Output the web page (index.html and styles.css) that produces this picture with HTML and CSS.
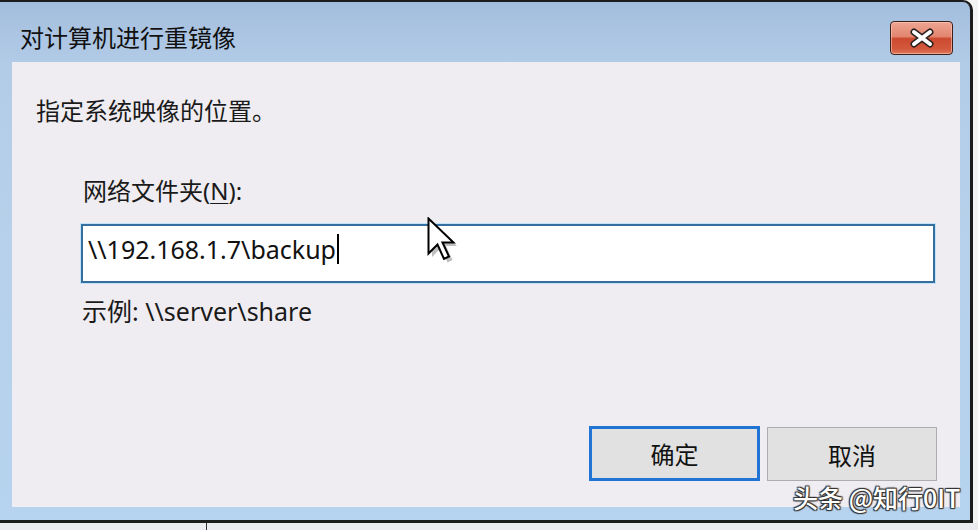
FILE: index.html
```html
<!DOCTYPE html>
<html lang="zh-CN">
<head>
<meta charset="utf-8">
<title>对计算机进行重镜像</title>
<link rel="stylesheet" href="styles.css">
</head>
<body>
<div class="screen">
  <div class="window">
    <div class="titlebar">
      <div class="title">对计算机进行重镜像</div>
      <button class="close" aria-label="关闭">
        <svg width="26" height="20" viewBox="0 0 26 20">
          <path d="M5 4 L21 16 M21 4 L5 16" stroke="#2a2020" stroke-width="7" stroke-linecap="round" fill="none"/>
          <path d="M5 4 L21 16 M21 4 L5 16" stroke="#ffffff" stroke-width="4" stroke-linecap="round" fill="none"/>
        </svg>
      </button>
    </div>
    <div class="content">
      <p class="intro">指定系统映像的位置。</p>
      <div class="group">
        <label class="label">网络文件夹(<u>N</u>):</label>
        <div class="input"><span class="value">\\192.168.1.7\backup</span><span class="caret"></span></div>
        <p class="example">示例: \\server\share</p>
      </div>
      <div class="buttons">
        <button class="btn btn-default">确定</button>
        <button class="btn">取消</button>
      </div>
    </div>
  </div>
  <div class="taskbar">
    <div class="task-cell"></div>
    <div class="task-rest"></div>
  </div>
  <svg class="cursor" width="30" height="46" viewBox="0 0 30 46">
    <path d="M3.5 3.5 L3.5 38.5 L12.5 29.5 L19 44 L24 41.5 L17.5 27.5 L28.5 27.5 Z" fill="#000" opacity="0.25" transform="translate(1.5,1.5)"/>
    <path d="M1.5 1.5 L1.5 36.5 L10.5 27.5 L17 42 L22 39.5 L15.5 25.5 L26.5 25.5 Z" fill="#fff" stroke="#000" stroke-width="2" stroke-linejoin="miter"/>
  </svg>
  <div class="watermark">头条 @知行0IT</div>
</div>
</body>
</html>
```
FILE: styles.css
```css
* { box-sizing: border-box; }
html, body { margin: 0; padding: 0; }
body {
  background: #f2f2f2;
  font-family: "Noto Sans", "Noto Sans CJK SC", sans-serif;
  color: #1a1a1a;
}
.screen {
  position: relative;
  width: 978px;
  height: 530px;
  overflow: hidden;
  background: #f3f3f3;
}
.window {
  width: 973px;
  height: 523px;
  border-top: 2px solid #1c1c1c;
  border-right: 3px solid #1c1c1c;
  border-bottom: 3px solid #1c1c1c;
  border-top-right-radius: 10px;
  background: linear-gradient(180deg, #a3bedd 0%, #b2cbe7 12%, #b7d0ea 40%, #b6d3ef 100%);
  display: flex;
  flex-direction: column;
}
.titlebar {
  height: 60px;
  display: flex;
  align-items: flex-start;
  justify-content: space-between;
  padding: 0 17px 0 20px;
}
.title {
  font-family: "Noto Sans CJK SC", sans-serif;
  font-size: 24px;
  line-height: 24px;
  margin-top: 23px;
  color: #111;
}
.close {
  margin-top: 19px;
  width: 63px;
  height: 34px;
  padding: 0;
  border: 1px solid #3b1f1a;
  border-radius: 4px;
  background: linear-gradient(180deg, #eda593 0%, #e38670 45%, #cc4a30 52%, #d3593d 85%, #e07a5c 100%);
  box-shadow: inset 0 0 0 1px rgba(255, 210, 195, 0.55);
  display: flex;
  align-items: center;
  justify-content: center;
}
.content {
  flex: 1;
  margin: 0 10px 13px 12px;
  background: #efedf1;
  display: flex;
  flex-direction: column;
  padding: 36px 23px 26px 24px;
}
.intro {
  margin: 0;
  font-size: 24px;
  line-height: 24px;
  font-family: "Noto Sans CJK SC", sans-serif;
}
.group {
  margin: 57px 0 0 45px;
  display: flex;
  flex-direction: column;
}
.label {
  font-size: 24px;
  line-height: 24px;
  margin-left: 2px;
}
.label u { text-decoration-thickness: 1px; text-underline-offset: 3px; }
.input {
  margin-top: 21px;
  width: 854px;
  height: 59px;
  border: 2px solid #346fa0;
  box-shadow: 0 0 0 1px #c3e2f6;
  background: #fff;
  display: flex;
  align-items: center;
  padding: 0 0 10px 5px;
}
.value {
  font-size: 25px;
  line-height: 26px;
  color: #111;
}
.caret {
  width: 2px;
  height: 30px;
  background: #000;
  margin-left: 1px;
}
.example {
  margin: 15px 0 0 1px;
  font-size: 25px;
  line-height: 26px;
}
.buttons {
  margin-top: auto;
  display: flex;
  justify-content: flex-end;
  align-items: flex-start;
  gap: 7px;
}
.btn {
  width: 170px;
  height: 54px;
  border: 1px solid #adadad;
  background: #e1e1e1;
  font-family: "Noto Sans CJK SC", sans-serif;
  font-size: 24px;
  color: #111;
  padding: 0;
}
.btn-default {
  width: 171px;
  height: 55px;
  border: 3px solid #1f74d4;
  margin-top: -1px;
}
.taskbar {
  height: 7px;
  display: flex;
  background: #e9ebee;
}
.task-cell {
  width: 207px;
  border-right: 1px solid #333;
}
.task-rest { flex: 1; }
.cursor {
  position: absolute;
  left: 427px;
  top: 217px;
}
.watermark {
  position: absolute;
  left: 793px;
  top: 481px;
  font-family: "Noto Sans CJK SC", sans-serif;
  font-size: 25px;
  font-weight: 500;
  line-height: 32px;
  color: #fff;
  text-shadow: 0 0 1px #333, 1px 1px 1px #333, -1px -1px 1px #333, 1px -1px 1px #333, -1px 1px 1px #333;
}
```
